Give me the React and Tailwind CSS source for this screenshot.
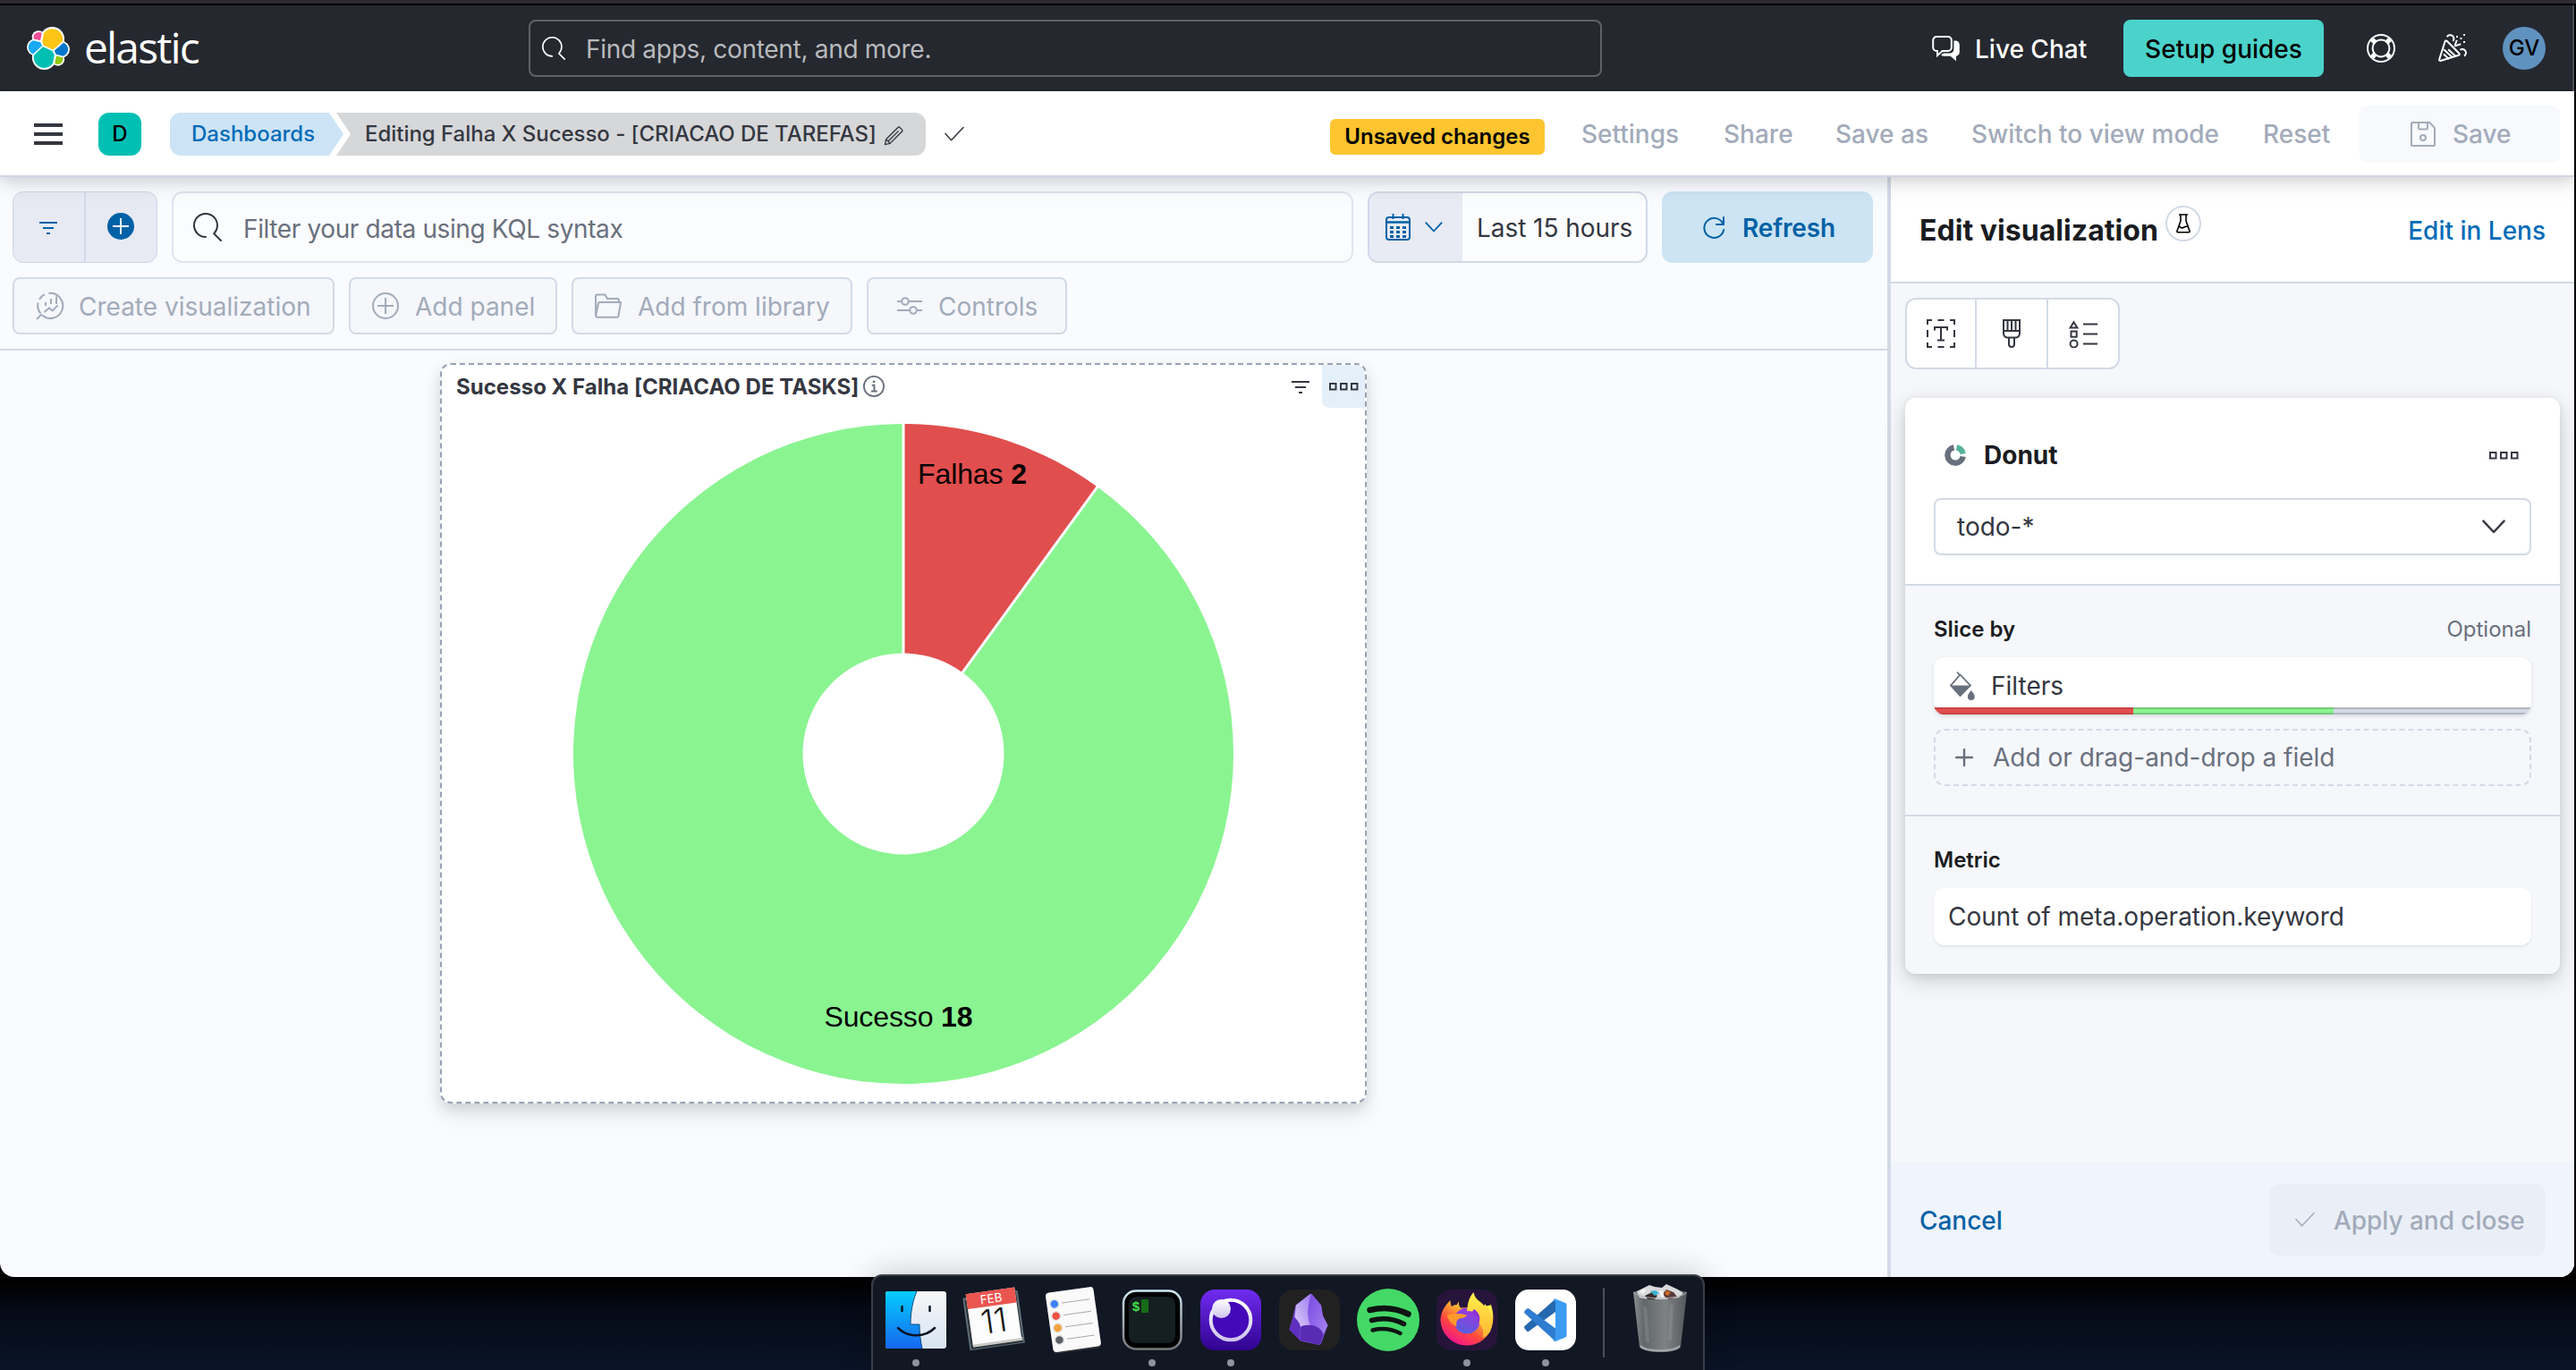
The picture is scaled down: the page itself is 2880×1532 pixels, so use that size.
import React from "react";

const Svg = ({ className, box = "0 0 16 16", children }) => (
  <svg viewBox={box} className={className} fill="none" stroke="currentColor" strokeWidth="1">
    {children}
  </svg>
);

const ElasticLogo = () => (
  <svg viewBox="0 0 32 32" className="h-12 w-12">
    <g fill="#fff">
      <circle cx="18.95" cy="9.1" r="9.1" />
      <circle cx="13" cy="22.9" r="9.1" />
      <circle cx="8.7" cy="7.7" r="4.9" />
      <circle cx="6.35" cy="15.2" r="6.35" />
      <circle cx="23.2" cy="24.2" r="4.9" />
      <circle cx="25.6" cy="16.8" r="6.35" />
    </g>
    <path fill="#FEC514" d="M12.58 13.787l7.002 3.211 7.066-6.213a7.849 7.849 0 00.152-1.557c0-4.287-3.472-7.774-7.739-7.774a7.721 7.721 0 00-6.394 3.407l-1.174 6.123 1.087 2.803z" />
    <path fill="#00BFB3" d="M5.33 21.23a7.882 7.882 0 00-.149 1.57c0 4.3 3.485 7.797 7.769 7.797a7.75 7.75 0 006.418-3.435l1.166-6.104-1.556-2.985-7.03-3.213L5.33 21.23z" />
    <path fill="#F04E98" d="M5.288 9.067l4.8 1.137 1.05-5.474a3.784 3.784 0 00-2.302-.779 3.817 3.817 0 00-3.8 3.826c0 .445.086.883.252 1.29z" />
    <path fill="#1BA9F5" d="M4.87 10.214c-2.143.713-3.642 2.778-3.642 5.056 0 2.217 1.366 4.196 3.417 4.982l6.734-6.106-1.236-2.65-5.273-1.282z" />
    <path fill="#93C90E" d="M20.87 27.161c.666.512 1.47.79 2.301.79a3.817 3.817 0 003.801-3.826 3.81 3.81 0 00-.252-1.29l-4.796-1.125-1.054 5.451z" />
    <path fill="#0077CC" d="M21.848 20.562l5.279 1.238c2.144-.713 3.643-2.778 3.643-5.057 0-2.213-1.369-4.188-3.423-4.975l-6.905 6.072 1.406 2.722z" />
  </svg>
);

const SearchIcon = ({ className }) => (
  <svg viewBox="0 0 16 16" className={className} fill="currentColor">
    <path d="M11.271 11.978l3.872 3.873a.502.502 0 00.708 0 .502.502 0 000-.708l-3.565-3.564c2.38-2.747 2.267-6.923-.342-9.532-2.73-2.73-7.17-2.73-9.898 0-2.728 2.729-2.728 7.17 0 9.9a6.955 6.955 0 004.949 2.05.5.5 0 000-1 5.96 5.96 0 01-4.242-1.757 6.01 6.01 0 010-8.486 6.004 6.004 0 018.484 0 6.01 6.01 0 010 8.486.5.5 0 00.034.738z" />
  </svg>
);

const ChatIcon = ({ className }) => (
  <Svg className={className}>
    <path d="M2.6 1.5h6.3a2 2 0 012 2v4a2 2 0 01-2 2H5.8L3 12V9.5h-.4a2 2 0 01-2-2v-4a2 2 0 012-2z" />
    <path fill="currentColor" stroke="none" d="M12.2 3.8h.9c1.3 0 2.3 1 2.3 2.3v4c0 1.2-.8 2.1-1.9 2.3v2.7l-3.2-2.7H6.6c-.6 0-1.1-.2-1.5-.6l1.3-1h3.5c1.3 0 2.3-1 2.3-2.3z" />
  </Svg>
);

const LifeIcon = ({ className }) => (
  <Svg className={className}>
    <circle cx="8" cy="8" r="7.5" />
    <circle cx="8" cy="8" r="4.7" />
    <g strokeWidth="2.7">
      <path d="M2.9 2.9l1.9 1.9M13.1 2.9l-1.9 1.9M2.9 13.1l1.9-1.9M13.1 13.1l-1.9-1.9" />
    </g>
  </Svg>
);

const CheerIcon = ({ className }) => (
  <Svg className={className}>
    <path strokeLinejoin="round" d="M4.8 3.9l6.9 7a.6.6 0 01-.3 1L1.3 15a.6.6 0 01-.7-.8l3.2-10.1a.6.6 0 011-.2z" />
    <path d="M3.1 8.6l5 4.6M3 11.2l3 2.8M5.6 8.6l4.3 4M4.9 1.6c.6-1 1.9-1.3 2.9-.7 1 .7 1.2 2 .4 3M12.2 8.9c1-.7 2.3-.5 2.9.5.6.9.4 2.2-.6 2.9M9.2 6.8l1.2-3.4M9.2 6.8l3.4-1.2" />
    <g fill="currentColor" stroke="none">
      <path d="M10 1h1v1h-1zM14 0h1v1h-1zM12.2 2h1v1h-1zM14 4h1v1h-1z" />
    </g>
  </Svg>
);

const PencilIcon = ({ className }) => (
  <Svg className={className}>
    <path strokeLinejoin="round" d="M1 15l.9-4.2L11.6 1.1a1 1 0 011.4 0l1.9 1.9a1 1 0 010 1.4L5.2 14.1zM1.9 10.8l3.3 3.3M3.8 12.2l8.3-8.3" />
  </Svg>
);

const CheckIcon = ({ className }) => (
  <Svg className={className}>
    <path strokeLinecap="round" strokeLinejoin="round" d="M1.3 7.6l4.4 4.9L14.7 3" />
  </Svg>
);

const ChevronIcon = ({ className }) => (
  <Svg className={className}>
    <path strokeLinecap="round" strokeLinejoin="round" strokeWidth="1.2" d="M2.2 4.8L8 11l5.8-6.2" />
  </Svg>
);

const FilterIcon = ({ className }) => (
  <Svg className={className} box="0 0 20 14">
    <path strokeWidth="2" d="M0 1h20M4 7h12M8 13h4" />
  </Svg>
);

const SaveIcon = ({ className }) => (
  <Svg className={className} box="0 0 14 14">
    <path d="M1 .5h9.6L13.5 3.4V13a.5.5 0 01-.5.5H1a.5.5 0 01-.5-.5V1A.5.5 0 011 .5z" />
    <path d="M4.5.5v3.1a.7.7 0 00.7.7h3.6a.7.7 0 00.7-.7V.5" />
    <circle cx="7" cy="9" r="1.5" />
  </Svg>
);

const CalendarIcon = ({ className }) => (
  <Svg className={className} box="0 0 28 30">
    <rect x="1" y="4" width="26" height="25" rx="3" strokeWidth="2" />
    <path strokeWidth="2.4" d="M1 9.5h26" />
    <path strokeWidth="2" d="M8.500 0v6M19.500 0v6" />
    <g strokeDasharray="4 3">
      <path d="M5 16h18M5 21h18M5 26h18" transform="translate(0 -.5)" strokeWidth="3" />
    </g>
  </Svg>
);

const RefreshIcon = ({ className }) => (
  <Svg className={className} box="0 0 26 27">
    <path strokeWidth="2" strokeLinecap="round" d="M24 2v8h-8M23.500 9.500A11 11 0 1024.200 16" />
  </Svg>
);

const LensIcon = ({ className }) => (
  <Svg className={className}>
    <path d="M7.200 1A7 7 0 1 1 3.300 13M2.700 12.300A7 7 0 0 1 1.300 6.200M2 4.400A7 7 0 0 1 5 1.600M3.200 12.800L.5 15.500" />
    <path d="M5.500 8V6M8.500 7V4M11.500 7V2.800M4.800 11.500l2.700-2.300 1.800 1.500 3-3" />
  </Svg>
);

const PlusCircleIcon = ({ className }) => (
  <Svg className={className} box="0 0 15 15">
    <circle cx="7.500" cy="7.500" r="7" />
    <path d="M7.500 3v9M3 7.500h9" />
  </Svg>
);

const FolderIcon = ({ className }) => (
  <Svg className={className} box="0 0 32 28">
    <path strokeWidth="2" strokeLinejoin="round" d="M2 25V3a1.500 1.500 0 011.500-1.500h9L15 6h11.500A1.500 1.500 0 0128 7.500V10M2 25.500L5 11a1.500 1.500 0 011.500-1H30l-2.600 15.500a1.500 1.500 0 01-1.500 1.200H3z" />
  </Svg>
);

const ControlsIcon = ({ className }) => (
  <Svg className={className} box="0 0 28 20">
    <g strokeWidth="2">
      <path d="M0 5h5M13 5h15M0 15h14M22 15h6" />
      <circle cx="9" cy="5" r="3.800" />
      <circle cx="18" cy="15" r="3.800" />
    </g>
  </Svg>
);

const BoxesIcon = ({ className }) => (
  <Svg className={className} box="0 0 34 10">
    <g strokeWidth="2">
      <rect x="2" y="2" width="6.500" height="6.500" />
      <rect x="14" y="2" width="6.500" height="6.500" />
      <rect x="26" y="2" width="6.500" height="6.500" />
    </g>
  </Svg>
);

const BeakerIcon = ({ className }) => (
  <Svg className={className} box="0 0 16 22">
    <path strokeWidth="1.600" strokeLinejoin="round" d="M3 1h10M5 1v7L.9 19.500a.9.9 0 00.9 1.200h12.400a.9.9 0 00.9-1.200L11 8V1M3 13.500c2 3 4.500 2.500 6 1.500s2.500-1 4-.5" />
  </Svg>
);

const TextBoxIcon = ({ className }) => (
  <Svg className={className} box="0 0 32 32">
    <g strokeWidth="2">
      <path d="M1 6V1h5M26 1h5v5M31 26v5h-5M6 31H1v-5M12.500 1h7M12.500 31h7M1 12v8M31 12v8" />
      <path d="M9 12.500V9h14v3.500M16 9v14.500M12 23.500h8" />
    </g>
  </Svg>
);

const BrushIcon = ({ className }) => (
  <Svg className={className} box="0 0 20 32">
    <g strokeWidth="2">
      <path d="M1 1h18v15a4.500 4.500 0 01-4.500 4.500H5.500A4.500 4.500 0 011 16zM1 13h18M5.500 1v11M10 1v11M14.500 1v11" />
      <path d="M7 20.500V28a3 3 0 006 0v-7.500" />
    </g>
  </Svg>
);

const LegendIcon = ({ className }) => (
  <Svg className={className} box="0 0 32 32">
    <g strokeWidth="2">
      <path d="M5.500 3.200L9.400 9.500H1.600zM2.500 13.500h6.200v6.200H2.500zM16 5.500h16M16 16.500h16M16 27.500h16" />
      <circle cx="5.600" cy="27.500" r="4" />
    </g>
  </Svg>
);

const PaintIcon = ({ className }) => (
  <Svg className={className} box="0 0 28 32">
    <path strokeWidth="1.800" d="M8 .5l3.500 4M11.500 3.500L1 15.500l10.500 11.500L23 15.500z" />
    <path fill="currentColor" stroke="none" d="M1 15.500h22L12.500 27.200a1.500 1.500 0 01-2 0zM23.700 21c2 2.500 4 4.600 4 7a3.900 3.900 0 01-7.800 0c0-2.400 2-4.500 3.800-7z" />
  </Svg>
);

const DonutIcon = () => (
  <svg viewBox="0 0 24 24" className="h-6 w-6" fill="none" strokeWidth="6.500">
    <path stroke="#69707d" d="M10.500 3.400A8.700 8.700 0 1020.700 13.500" />
    <path stroke="#54b399" d="M13.500 3.400A8.700 8.700 0 0120.600 10.500" />
  </svg>
);

const polar = (r, deg) => {
  const a = (deg * Math.PI) / 180;
  return `${(369 + r * Math.sin(a)).toFixed(2)} ${(369 - r * Math.cos(a)).toFixed(2)}`;
};
const wedge = (from, to) =>
  `M${polar(369, from)}A369 369 0 ${to - from > 180 ? 1 : 0} 1 ${polar(369, to)}L${polar(112.5, to)}A112.500 112.500 0 ${to - from > 180 ? 1 : 0} 0 ${polar(112.5, from)}Z`;

const DonutChart = () => (
  <svg viewBox="0 0 738 738" className="ml-[147px] mt-[18px] h-[738px] w-[738px] overflow-visible">
    <path d={wedge(36, 360)} fill="#8af491" />
    <path d={wedge(0, 36)} fill="#e14e4e" />
    <path d={`M${polar(112, 0)}L${polar(370, 0)}M${polar(112, 36)}L${polar(370, 36)}`} stroke="#fff" strokeWidth="3" />
    <g className="font-['Liberation_Sans',sans-serif] text-[32px]" fill="#000">
      <text x="385" y="67" textLength="122">
        Falhas <tspan fontWeight="700">2</tspan>
      </text>
      <text x="280.500" y="674" textLength="166">
        Sucesso <tspan fontWeight="700">18</tspan>
      </text>
    </g>
  </svg>
);

const TopBar = () => (
  <header className="flex h-24 items-center border-r-2 border-[#4b4d55] bg-[#25282f] pl-[30px] text-white">
    <ElasticLogo />
    <div className="ml-4 w-[497px] pb-0.5 font-['Open_Sans',sans-serif] text-[48px] leading-none tracking-[-1.850px]">elastic</div>
    <div className="flex h-16 w-[1200px] items-center rounded-lg border-2 border-[#5f6267] pl-[13px]">
      <SearchIcon className="h-[26px] w-[26px]" />
      <span className="ml-[23px] pt-0.5 text-[28px] tracking-[-0.300px] text-[#b8babd]">Find apps, content, and more.</span>
    </div>
    <ChatIcon className="ml-[369px] h-8 w-8" />
    <span className="ml-4 w-[166px] pt-0.5 text-[28px] font-medium">Live Chat</span>
    <div className="flex h-16 w-56 items-center justify-center rounded-lg bg-[#4bd3cb] pt-0.5 text-[28px] font-medium text-black">Setup guides</div>
    <LifeIcon className="ml-12 h-8 w-8" />
    <CheerIcon className="ml-12 h-8 w-8" />
    <div className="ml-10 flex h-12 w-12 items-center justify-center rounded-full bg-[#6092c0] text-[24px] font-medium text-black">GV</div>
  </header>
);

const NavBar = () => (
  <nav className="relative z-10 flex h-24 items-center border-b-2 border-[#d0d6e3] bg-white pl-[38px] shadow-[0_4px_16px_rgba(0,0,0,0.14),0_12px_24px_rgba(0,0,0,0.05)]">
    <div className="flex w-8 flex-col gap-1.5 pt-0.5">
      <div className="h-1 bg-[#343741]" />
      <div className="h-1 bg-[#343741]" />
      <div className="h-1 bg-[#343741]" />
    </div>
    <div className="ml-10 mt-0.5 flex h-12 w-12 items-center justify-center rounded-xl bg-[#00bfb3] text-[24px] font-medium text-black">D</div>
    <div className="ml-8 mt-0.5 flex h-12 w-[194px] items-center rounded-l-xl bg-[#cce4f5] pl-6 text-[24px] font-medium text-[#006bb8] [clip-path:polygon(0_0,178px_0,100%_50%,178px_100%,0_100%)]">
      Dashboards
    </div>
    <div className="-ml-2 mt-0.5 flex h-12 w-[659px] items-center rounded-r-xl bg-[#d6d7d9] pl-8 text-[24px] font-medium text-[#343741] [clip-path:polygon(0_0,100%_0,100%_100%,0_100%,16px_50%)]">
      <span className="w-[580px] whitespace-nowrap tracking-[-0.030px]">Editing Falha X Sucesso - [CRIACAO DE TAREFAS]</span>
      <PencilIcon className="mt-1 h-[22px] w-[22px]" />
    </div>
    <CheckIcon className="ml-5 mt-0.5 h-6 w-6 text-[#343741]" />
    <div className="ml-[408px] mt-2 flex h-10 w-60 items-center justify-center whitespace-nowrap rounded-md bg-[#fec530] text-[24px] font-semibold text-black">Unsaved changes</div>
    <div className="ml-[41px] flex whitespace-nowrap pt-0.5 text-[28px] font-medium text-[#a2abba]">
      <span className="w-[159px]">Settings</span>
      <span className="w-[125px]">Share</span>
      <span className="w-[152px]">Save as</span>
      <span className="w-[326px]">Switch to view mode</span>
      <span className="w-[108px]">Reset</span>
    </div>
    <div className="mt-0.5 flex h-16 w-56 items-center rounded-lg bg-[#f7f9fc] pl-[57px] text-[28px] font-medium text-[#a2abba]">
      <SaveIcon className="h-7 w-7" />
      <span className="ml-[19px]">Save</span>
    </div>
  </nav>
);

const FilterBar = () => (
  <div className="flex h-20 pl-3.5">
    <div className="flex w-[162px] overflow-hidden rounded-xl border border-[#cdd5e5] bg-[#e7eaf3] text-[#0061a6]">
      <div className="flex w-[81px] items-center justify-center border-r-2 border-[#d3dae8] pr-0.5 pt-0.5">
        <FilterIcon className="h-3.5 w-5" />
      </div>
      <div className="flex flex-1 items-center justify-center pb-0.5 pr-0.5">
        <div className="flex h-[30px] w-[30px] items-center justify-center rounded-full bg-[#0061a6]">
          <Svg className="h-[18px] w-[18px] text-white" box="0 0 18 18">
            <path strokeWidth="2" d="M9 0v18M0 9h18" />
          </Svg>
        </div>
      </div>
    </div>
    <div className="ml-4 flex w-[1321px] items-center rounded-xl border-2 border-[#e2e4f0] bg-[#fbfcfe] pl-[22px]">
      <SearchIcon className="h-8 w-8 text-[#343741]" />
      <span className="ml-6 pt-[3px] text-[28px] tracking-[-0.380px] text-[#69707d]">Filter your data using KQL syntax</span>
    </div>
    <div className="ml-4 flex w-[313px] overflow-hidden rounded-xl border-2 border-[#d1d8e8] bg-[#fbfcfe]">
      <div className="flex w-[104px] items-center bg-[#e8ebf3] pl-[18px] text-[#0061a6]">
        <CalendarIcon className="h-[30px] w-7" />
        <ChevronIcon className="ml-3.5 h-6 w-6" />
      </div>
      <span className="flex items-center whitespace-nowrap pl-4 pt-0.5 text-[28px] tracking-[-0.050px] text-[#343741]">Last 15 hours</span>
    </div>
    <div className="ml-4 flex w-[236px] items-center rounded-xl bg-[#cce4f3] pl-[45px] text-[#0061a6]">
      <RefreshIcon className="h-[27px] w-[26px]" />
      <span className="ml-[19px] pt-0.5 text-[28px] font-semibold tracking-[-0.150px]">Refresh</span>
    </div>
  </div>
);

const ToolButton = ({ className, icon, children }) => (
  <div className={"flex items-center whitespace-nowrap rounded-lg border-2 border-[#d3dae8] bg-[#f5f7fb] text-[28px] text-[#a2abba] " + className}>
    {icon}
    <span className="pt-0.5">{children}</span>
  </div>
);

const ToolRow = () => (
  <div className="mt-4 flex h-16 gap-4 pl-3.5">
    <ToolButton className="w-[360px] pl-6" icon={<LensIcon className="mr-4 h-8 w-8" />}>
      Create visualization
    </ToolButton>
    <ToolButton className="w-[233px] pl-6" icon={<PlusCircleIcon className="mr-[18px] h-[30px] w-[30px]" />}>
      Add panel
    </ToolButton>
    <ToolButton className="w-[314px] pl-[23px]" icon={<FolderIcon className="mr-[17px] h-7 w-8" />}>
      Add from library
    </ToolButton>
    <ToolButton className="w-[224px] pl-8" icon={<ControlsIcon className="mr-[18px] h-5 w-7" />}>
      Controls
    </ToolButton>
  </div>
);

const ChartPanel = () => (
  <section className="ml-[492px] mt-3.5 h-[828px] w-[1036px] rounded-xl border-2 border-dashed border-[#98a2b3] bg-white shadow-[0_6px_16px_rgba(0,0,0,0.13),0_16px_26px_rgba(0,0,0,0.06)]">
    <div className="flex h-12 items-center pl-4">
      <span className="w-[455px] whitespace-nowrap pt-0.5 text-[24px] font-bold tracking-[0.030px] text-[#343741]">Sucesso X Falha [CRIACAO DE TASKS]</span>
      <Svg className="h-6 w-6 text-[#69707d]">
        <circle cx="8" cy="8" r="7.400" strokeWidth="1.200" />
        <path strokeWidth="1.300" d="M6.500 7.200h1.800v4.500M6 11.700h4.500" />
        <circle cx="8" cy="4.600" r=".9" fill="currentColor" stroke="none" />
      </Svg>
      <FilterIcon className="ml-[455px] mt-0.5 h-3.5 w-5 text-[#343741]" />
      <div className="ml-3.5 flex h-12 w-12 items-center justify-center rounded-bl-lg rounded-tr-[10px] bg-[#e3f0f9]">
        <BoxesIcon className="h-[10px] w-[34px] text-[#343741]" />
      </div>
    </div>
    <DonutChart />
  </section>
);

const SidePanel = () => (
  <aside className="flex w-[768px] flex-col border-l-4 border-[#d3dae6] bg-[#f5f7fb]">
    <div className="flex h-[119px] border-b-2 border-[#d3dae6] bg-white pl-8">
      <span className="w-[275px] whitespace-nowrap pt-10 text-[32px] font-bold leading-[40px] tracking-[0.050px] text-[#1a1c21]">Edit visualization</span>
      <div className="mt-8 flex h-10 w-10 items-center justify-center rounded-full border-2 border-[#d3dae6]">
        <BeakerIcon className="h-[22px] w-4 text-black" />
      </div>
      <span className="ml-auto mr-8 pt-10 text-[28px] font-medium leading-[40px] text-[#006bb8]">Edit in Lens</span>
    </div>
    <div className="ml-4 mt-4 flex h-20 w-60 rounded-xl border-2 border-[#d3dae6] bg-white text-[#343741]">
      <div className="flex w-[78px] items-center justify-center border-r-2 border-[#d3dae6]">
        <TextBoxIcon className="h-8 w-8" />
      </div>
      <div className="flex w-20 items-center justify-center border-r-2 border-[#d3dae6]">
        <BrushIcon className="h-8 w-5" />
      </div>
      <div className="flex w-[78px] items-center justify-center">
        <LegendIcon className="h-8 w-8" />
      </div>
    </div>
    <div className="mx-4 mt-8 h-[644px] overflow-visible rounded-xl shadow-[0_2px_10px_rgba(0,0,0,0.08),0_8px_24px_rgba(0,0,0,0.16)]">
      <div className="h-[210px] rounded-t-xl border-b-2 border-[#d3dae6] bg-white px-8 pt-11">
        <div className="flex h-10 items-center pl-3">
          <DonutIcon />
          <span className="ml-5 text-[28px] font-bold leading-10 text-[#1a1c21]">Donut</span>
          <BoxesIcon className="ml-auto mr-3.5 h-[10px] w-[34px] text-[#343741]" />
        </div>
        <div className="mt-7 flex h-16 items-center justify-between rounded-lg border-2 border-[#d3dae6] pl-6 pr-6 text-[28px] text-[#343741]">
          todo-*
          <ChevronIcon className="h-8 w-8" />
        </div>
      </div>
      <div className="h-[258px] border-b-2 border-[#d3dae6] bg-[#f5f7fb] px-8 pt-7">
        <div className="flex h-[42px] items-center justify-between text-[24px]">
          <span className="font-semibold text-[#1a1c21]">Slice by</span>
          <span className="text-[#69707d]">Optional</span>
        </div>
        <div className="mt-2.5 flex h-16 flex-col overflow-hidden rounded-xl bg-white shadow-[0_2px_4px_rgba(0,0,0,0.12)]">
          <div className="flex h-14 items-center pl-[18px] pt-2 text-[28px] text-[#343741]">
            <PaintIcon className="h-8 w-7 text-[#69707d]" />
            <span className="ml-[18px]">Filters</span>
          </div>
          <div className="flex h-2">
            <div className="w-[223px] border-y-2 border-[#c94545] bg-[#e14e4e]" />
            <div className="w-[224px] border-y-2 border-[#74cc7a] bg-[#8af491]" />
            <div className="flex-1 border-y-2 border-[#b0b5c0] bg-[#d3dae6]" />
          </div>
        </div>
        <div className="mt-4 flex h-16 items-center rounded-xl border-2 border-dashed border-[#d3dae6] pl-[22px] text-[28px] text-[#69707d]">
          <Svg className="h-5 w-5" box="0 0 20 20">
            <path strokeWidth="2.400" strokeLinecap="round" d="M10 1v18M1 10h18" />
          </Svg>
          <span className="ml-[22px]">Add or drag-and-drop a field</span>
        </div>
      </div>
      <div className="h-[176px] rounded-b-xl bg-[#f5f7fb] px-8 pt-7">
        <div className="flex h-[42px] items-center text-[24px] font-semibold text-[#1a1c21]">Metric</div>
        <div className="mt-2.5 flex h-16 items-center rounded-xl bg-white pl-4 text-[28px] text-[#343741] shadow-[0_2px_3px_rgba(0,0,0,0.08)]">Count of meta.operation.keyword</div>
      </div>
    </div>
    <div className="mt-auto flex h-32 items-center justify-between bg-[#f0f4fc] px-8 text-[28px] font-medium">
      <span className="pt-0.5 tracking-[-0.050px] text-[#0061a6]">Cancel</span>
      <div className="flex h-20 w-[309px] items-center whitespace-nowrap rounded-xl bg-[#eaeff7] pl-7 text-[#a2abba]">
        <CheckIcon className="h-6 w-6" />
        <span className="ml-5 pt-0.5 tracking-[-0.050px]">Apply and close</span>
      </div>
    </div>
  </aside>
);

const FinderIcon = () => (
  <svg viewBox="0 0 68 64" className="h-16 w-[68px]">
    <defs>
      <linearGradient id="finderL" x1="0" y1="0" x2="0" y2="1">
        <stop offset="0" stopColor="#04cdfd" />
        <stop offset="1" stopColor="#1667f0" />
      </linearGradient>
      <linearGradient id="finderR" x1="0" y1="0" x2="0" y2="1">
        <stop offset="0" stopColor="#f6f6f8" />
        <stop offset="1" stopColor="#d8e4f3" />
      </linearGradient>
    </defs>
    <rect width="68" height="64" rx="3" fill="url(#finderR)" />
    <path d="M3 0h32c-4 9-7 22-7 37h10c0 9 1 18 3 27H3a3 3 0 01-3-3V3a3 3 0 013-3z" fill="url(#finderL)" />
    <path d="M35 0c-4 9-7 22-7 37h10c0 9 1 18 3 27" fill="none" stroke="#0e4f80" strokeWidth="1" />
    <path d="M18.500 17v5M49.500 17v5M14 41c11 11 30 11 41 0" fill="none" stroke="#0a1626" strokeWidth="2.500" strokeLinecap="round" />
  </svg>
);

const CalendarApp = () => (
  <svg viewBox="0 0 72 74" className="h-[74px] w-[72px]">
    <g transform="rotate(-8 36 37)">
      <rect x="4" y="8" width="62" height="59" fill="#5f6d76" />
      <rect x="6" y="10" width="58" height="56" fill="#2a3238" />
      <path d="M8 60h56v4H8z" fill="#c9c9c6" />
      <rect x="8" y="4" width="55" height="57" fill="#fcfcfc" />
      <rect x="8" y="4" width="55" height="17" fill="#ea5550" />
      <text x="35.500" y="17.500" textAnchor="middle" fontSize="13.500" fill="#fff" className="font-['Inter',sans-serif]">FEB</text>
      <text x="35" y="51" textAnchor="middle" fontSize="37" fill="#1a1a1a" className="font-['Inter',sans-serif] font-light">11</text>
    </g>
  </svg>
);

const RemindersApp = () => (
  <svg viewBox="0 0 68 76" className="h-[76px] w-[68px]">
    <g transform="rotate(-8 34 38)">
      <rect x="7" y="6" width="54" height="67" rx="4" fill="#2b2d33" />
      <rect x="7" y="4" width="54" height="67" rx="4" fill="#fafafa" />
      <path d="M24 17.500h31M24 31h31M24 44.500h31M24 58h31" stroke="#a9a9a9" strokeWidth="1" />
      <g stroke="#e4e4e4" strokeWidth="1.500">
        <circle cx="15.500" cy="17.500" r="5" fill="#3d80f4" />
        <circle cx="15.500" cy="31" r="5" fill="#ee5142" />
        <circle cx="15.500" cy="44.500" r="5" fill="#f3a13b" />
        <circle cx="15.500" cy="58" r="5" fill="#5c6068" />
      </g>
    </g>
  </svg>
);

const TerminalApp = () => (
  <svg viewBox="0 0 68 68" className="h-[68px] w-[68px]">
    <defs>
      <linearGradient id="termRim" x1="0" y1="0" x2="0" y2="1">
        <stop offset="0" stopColor="#cfe7f1" />
        <stop offset="1" stopColor="#77777a" />
      </linearGradient>
    </defs>
    <rect x="2" y="1.500" width="64.500" height="65" rx="14" fill="#000" stroke="url(#termRim)" strokeWidth="2.500" />
    <rect x="8" y="8" width="52" height="52" rx="8" fill="#151e20" />
    <rect x="22" y="11" width="8" height="15" fill="#176b18" />
    <text x="11.500" y="24" fontSize="15" fill="#3fe24b" className="font-['Liberation_Mono',monospace] font-bold">$</text>
  </svg>
);

const InsomniaApp = () => (
  <svg viewBox="0 0 68 68" className="h-[68px] w-[68px]">
    <defs>
      <linearGradient id="insBg" x1="0" y1="0" x2="0" y2="1">
        <stop offset="0" stopColor="#702cf0" />
        <stop offset="1" stopColor="#300390" />
      </linearGradient>
      <linearGradient id="insRing" x1="0" y1="0" x2="0" y2="1">
        <stop offset="0" stopColor="#fff" />
        <stop offset="1" stopColor="#cfc4ec" />
      </linearGradient>
    </defs>
    <rect width="68" height="68" rx="16" fill="url(#insBg)" />
    <circle cx="34" cy="34" r="22.300" fill="#4409b8" stroke="url(#insRing)" strokeWidth="4" />
    <circle cx="23.500" cy="21.500" r="10.500" fill="url(#insRing)" />
  </svg>
);

const ObsidianApp = () => (
  <svg viewBox="0 0 68 68" className="h-[68px] w-[68px]">
    <defs>
      <linearGradient id="obsA" x1="0" y1="1" x2="1" y2="0">
        <stop offset="0" stopColor="#dccdfa" />
        <stop offset="1" stopColor="#9a78ee" />
      </linearGradient>
      <linearGradient id="obsB" x1="0" y1="0" x2="1" y2="1">
        <stop offset="0" stopColor="#7a48e0" />
        <stop offset="1" stopColor="#a685f2" />
      </linearGradient>
    </defs>
    <rect width="68" height="68" rx="16" fill="#212121" />
    <path d="M34 5.500c1-.9 2.300-.9 3.200 0L47 17.500l2 12 5.500 10.500-7.500 20.500c-1 1.300-2 1.500-3.500 1.200L24 57.500 11.500 45l4-14.500 3-13z" fill="#7b4fdc" />
    <path d="M34.500 5.300L19 17.500 17.500 31l6.500 11 11-2.500c-3-10-3-20 2-33.500z" fill="url(#obsA)" />
    <path d="M36 5.300L47 17.500l2 12 5.500 10.500-5 10c-3-8-8-10-15-10.500-3.500-11-3-20 1.500-34.200z" fill="url(#obsB)" />
    <path d="M16 30c5 4 8 9 8 12.500-1 5-1 10-0.500 14.500L11.500 45z" fill="#5f2fc0" />
    <path d="M25 41c9-3 20-1 24.500 9l-3.500 11c-7 1-15-4-22-4-.500-6 0-11 1-16z" fill="#5a2bb3" />
  </svg>
);

const SpotifyApp = () => (
  <svg viewBox="0 0 70 70" className="h-[70px] w-[70px]">
    <circle cx="35" cy="35" r="35" fill="#44d967" />
    <g fill="none" stroke="#0e1512" strokeLinecap="round">
      <path strokeWidth="6.500" d="M14.500 24c14-3.500 30-2 43 4.500" />
      <path strokeWidth="5.500" d="M16.500 35.500c12-3 25-1.500 36 4" />
      <path strokeWidth="4.500" d="M17.500 46.500c10-2.500 21-1.500 31 3.500" />
    </g>
  </svg>
);

const FirefoxApp = () => (
  <svg viewBox="0 0 68 68" className="h-[68px] w-[68px]">
    <defs>
      <linearGradient id="ffBody" x1="0.850" y1="0.100" x2="0.250" y2="0.950">
        <stop offset="0" stopColor="#fff14f" />
        <stop offset="0.350" stopColor="#ffa930" />
        <stop offset="0.650" stopColor="#ff4a3d" />
        <stop offset="1" stopColor="#f0148a" />
      </linearGradient>
      <linearGradient id="ffGlobe" x1="0.700" y1="0" x2="0.300" y2="1">
        <stop offset="0" stopColor="#a033e0" />
        <stop offset="1" stopColor="#5560dc" />
      </linearGradient>
      <linearGradient id="ffTail" x1="0" y1="0" x2="0" y2="1">
        <stop offset="0" stopColor="#fff04d" />
        <stop offset="1" stopColor="#ffb52f" />
      </linearGradient>
    </defs>
    <rect width="68" height="68" rx="16" fill="#26143a" />
    <path d="M15.500 12c0 3 .500 5 1.500 7 2-1.500 4-2 6-2l0 0c.500-1.500 1-2.500 1.800-3.500 0 3 .500 5 2.200 7L41 20c5-3 16 0 20-3 2 7 3 12 2 20a29.400 29.400 0 01-58.500-2C4 27 9 18 15.500 12z" fill="url(#ffBody)" />
    <circle cx="34" cy="35" r="14.500" fill="url(#ffGlobe)" />
    <path d="M12 29c4-2 9-2 13-2 3 0 6 1.500 9 1.200-1 3.300-5 3.500-8 4.300-4 1.300-4 5-3.500 9-6-3-9-7-10.500-12.500z" fill="#ff9a2c" />
    <path d="M41.500 3c1 6 5 9 9 12 1 1 2 2 2.500 3.500L54 16c7 8 9.500 17 7.500 26-1 6-5 10-10 12 2-7 0-13-4-16 1-6-1-10-6.500-13-2-1-5-.5-7-1 1-6 1-14 7.500-21z" fill="url(#ffTail)" />
    <path d="M42 22c6 4 8 10 5 16-.500-6-3-9-8-12z" fill="#8f32d8" />
  </svg>
);

const CodeApp = () => (
  <svg viewBox="0 0 68 68" className="h-[68px] w-[68px]">
    <rect width="68" height="68" rx="15" fill="#fff" />
    <path d="M45 10.500v14.500L15.500 46.500a2 2 0 01-2.500 0l-2.500-3a2 2 0 010-2.500z" fill="#2468b0" />
    <path d="M10.500 26.500a2 2 0 010-2.500l2.500-2.500a2 2 0 012.500 0L45 43.500V58z" fill="#2f7dd1" />
    <path d="M45 10.500l11 4.500a2 2 0 011.500 2v34.500a2 2 0 01-1.500 2L45 58c-1 0-2-.5-2.500-1.500l2.500-2V14l-2.500-2c.5-1 1.500-1.500 2.500-1.500z" fill="#3b9bf0" />
  </svg>
);

const TrashApp = () => (
  <svg viewBox="0 0 62 80" className="h-20 w-[62px]">
    <defs>
      <linearGradient id="trash" x1="0" y1="0" x2="1" y2="0">
        <stop offset="0" stopColor="#8b8e90" />
        <stop offset="0.200" stopColor="#62676a" />
        <stop offset="0.600" stopColor="#7e8283" />
        <stop offset="1" stopColor="#54585b" />
      </linearGradient>
    </defs>
    <path d="M1 10c10-4 50-4 60 0l-7 61c-3 8-42 8-46 0z" fill="url(#trash)" />
    <path d="M5 9l14-7 6 2 8 1 5-4 13 6 6 4-5 5-16 2-18 0-10-2z" fill="#d9dadb" />
    <path d="M14 14l8-4 6 4-3 4h-8z" fill="#3a2a28" />
    <path d="M33 13l5-6 8 3 4 5-9 3z" fill="#5b3a36" />
    <path d="M20 9l6-1 4 3-5 3z" fill="#36b3d1" />
    <path d="M38 8l5 2-3 4-4-2z" fill="#c96a2a" />
    <path d="M30 9l3 8h3l-2-9zM8 9l8-3-4 6z" fill="#f4f4f4" />
    <path d="M1 10c8 9 52 9 60 0" fill="none" stroke="#aeb2b4" strokeWidth="1" />
    <path d="M9 70c6 7 38 7 44 0" fill="none" stroke="#a5a9ab" strokeWidth="2" />
    <path d="M14 26l3 40M44 24l-2 40" stroke="#969a9b" strokeWidth="4" opacity="0.350" />
  </svg>
);

const DockItem = ({ running, children }) => (
  <div className="flex h-[106px] w-[88px] flex-col items-center">
    <div className="flex h-[97px] flex-none items-center justify-center">{children}</div>
    {running && <div className="-mt-2 h-2 w-2 flex-none translate-y-1 rounded-full bg-[#8f939f]" />}
  </div>
);

const Dock = () => (
  <div className="absolute left-[974px] top-[1425px] z-20 flex h-[120px] w-[932px] rounded-t-[12px] border-2 border-[#3b3e48] bg-[#121724] pl-1 shadow-[0_0_36px_rgba(0,0,0,0.22)]">
    <DockItem running><FinderIcon /></DockItem>
    <DockItem><CalendarApp /></DockItem>
    <DockItem><RemindersApp /></DockItem>
    <DockItem running><TerminalApp /></DockItem>
    <DockItem running><InsomniaApp /></DockItem>
    <DockItem><ObsidianApp /></DockItem>
    <DockItem><SpotifyApp /></DockItem>
    <DockItem running><FirefoxApp /></DockItem>
    <DockItem running><CodeApp /></DockItem>
    <div className="ml-5 mt-[13px] h-[78px] w-0.5 bg-[#4b4f59]" />
    <div className="ml-[31px] mt-2"><TrashApp /></div>
  </div>
);

export default function App() {
  return (
    <div className="relative h-[1532px] w-[2880px] overflow-hidden bg-[linear-gradient(to_bottom,#000_0,#000_1432px,#050a16_1465px,#0a1427_1532px)] font-['Inter',sans-serif] leading-normal">
      <div className="h-1 bg-[#2d2a34]" />
      <div className="h-0.5 bg-black" />
      <div className="h-[1422px] w-[2878px] overflow-hidden rounded-b-[16px] bg-[#f9fbfe]">
        <TopBar />
        <NavBar />
        <div className="flex h-[1230px]">
          <main className="w-[2110px]">
            <div className="h-[194px] border-b-2 border-[#d3dae6] pt-4">
              <FilterBar />
              <ToolRow />
            </div>
            <ChartPanel />
          </main>
          <SidePanel />
        </div>
      </div>
      <Dock />
    </div>
  );
}
